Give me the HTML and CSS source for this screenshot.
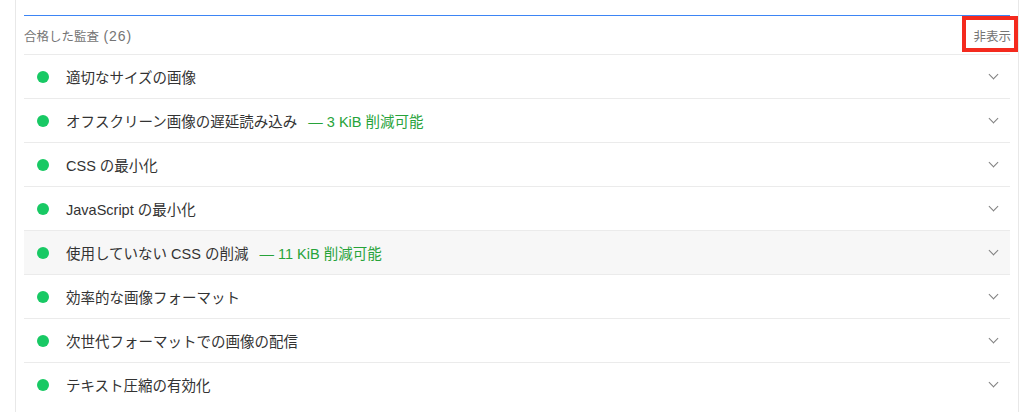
FILE: index.html
```html
<!DOCTYPE html>
<html lang="ja">
<head>
<meta charset="utf-8">
<title>合格した監査</title>
<link rel="stylesheet" href="styles.css">
</head>
<body>
<div class="panel">
  <div class="clump-header">
    <span class="clump-title">合格した監査 <span class="count">(26)</span></span>
    <span class="toggle">非表示</span>
    <span class="highlight-box"></span>
  </div>
  <div class="audits">
    <div class="audit"><span class="dot"></span><span class="title">適切なサイズの画像</span><span class="chev"></span></div>
    <div class="audit"><span class="dot"></span><span class="title">オフスクリーン画像の遅延読み込み</span><span class="saving">— 3 KiB 削減可能</span><span class="chev"></span></div>
    <div class="audit"><span class="dot"></span><span class="title">CSS の最小化</span><span class="chev"></span></div>
    <div class="audit"><span class="dot"></span><span class="title">JavaScript の最小化</span><span class="chev"></span></div>
    <div class="audit hover"><span class="dot"></span><span class="title">使用していない CSS の削減</span><span class="saving">— 11 KiB 削減可能</span><span class="chev"></span></div>
    <div class="audit"><span class="dot"></span><span class="title">効率的な画像フォーマット</span><span class="chev"></span></div>
    <div class="audit"><span class="dot"></span><span class="title">次世代フォーマットでの画像の配信</span><span class="chev"></span></div>
    <div class="audit"><span class="dot"></span><span class="title">テキスト圧縮の有効化</span><span class="chev"></span></div>
  </div>
</div>
</body>
</html>
```
FILE: styles.css
```css
html, body {
  margin: 0;
  padding: 0;
  background: #fff;
  height: 100%;
  overflow: hidden;
}
body {
  font-family: "Liberation Sans", "Noto Sans CJK JP", sans-serif;
  color: #333;
}
.panel {
  margin: 0 6px 0 15px;
  border-left: 1px solid #e8e8e8;
  border-right: 1px solid #e8e8e8;
  padding: 15px 8px 0 8px;
  height: 412px;
  box-sizing: border-box;
}
.clump-header {
  position: relative;
  border-top: 1px solid #3d85f5;
  height: 38px;
  display: flex;
  align-items: center;
  justify-content: space-between;
  font-size: 12.5px;
  color: #757575;
}
.clump-title {
  padding-top: 1px;
}
.count {
  font-size: 14px;
  letter-spacing: 0.9px;
  margin-left: 1px;
}
.toggle {
  margin-right: -1px;
  padding-top: 1px;
}
.highlight-box {
  position: absolute;
  top: 0;
  right: -8px;
  width: 48px;
  height: 28px;
  border: 4px solid #f42a1e;
}
.audits {
  display: flex;
  flex-direction: column;
}
.audit {
  display: flex;
  align-items: center;
  height: 43px;
  border-top: 1px solid #ebebeb;
  font-size: 14.5px;
}
.audit.hover {
  background: #f7f7f7;
}
.dot {
  width: 12px;
  height: 12px;
  border-radius: 50%;
  background: #18c964;
  margin-left: 13px;
  margin-right: 17px;
  flex: none;
}
.title {
  color: #333;
}
.saving {
  color: #27a33a;
  margin-left: 11px;
}
.chev {
  margin-left: auto;
  margin-right: 13px;
  width: 6px;
  height: 6px;
  border-right: 1.5px solid #808080;
  border-bottom: 1.5px solid #808080;
  transform: rotate(45deg);
  margin-top: -4px;
}
```
